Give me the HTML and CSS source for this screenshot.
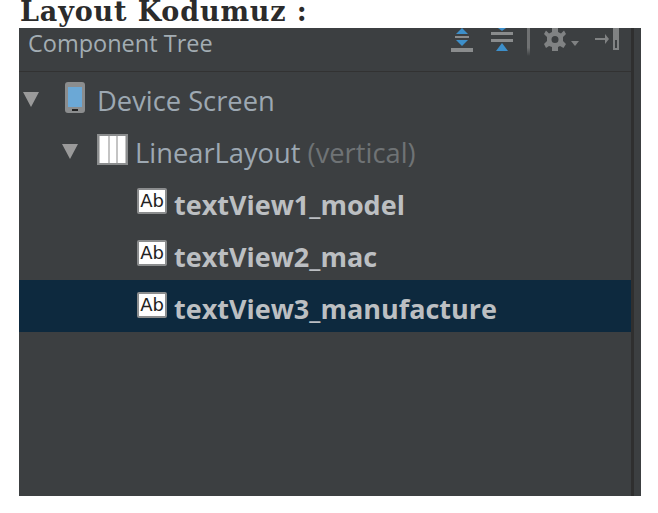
FILE: index.html
```html
<!DOCTYPE html>
<html lang="en">
<head>
  <meta charset="UTF-8">
  <meta name="viewport" content="width=device-width, initial-scale=1.0">
  <title>Layout Kodumuz</title>
  <link rel="stylesheet" href="styles.css">
</head>
<body>
  <h1 class="page-title">Layout Kodumuz :</h1>

  <div class="panel">
    <div class="panel-main">
      <!-- Header -->
      <div class="panel-header">
        <span class="panel-title">Component Tree</span>
        <div class="toolbar">
          <svg class="tool tool-expand" width="24" height="24" viewBox="0 0 24 24">
            <path d="M12 0L18 6H6z" fill="#3d8fca"/>
            <rect x="5" y="8" width="14" height="2" fill="#8a8c8d"/>
            <path d="M6 12H18L12 18z" fill="#3d8fca"/>
            <rect x="1" y="20" width="22" height="4" fill="#8a8c8d"/>
          </svg>
          <svg class="tool tool-collapse" width="24" height="24" viewBox="0 0 24 24">
            <path d="M8 0H16L12 3z" fill="#3d8fca"/>
            <rect x="1" y="4" width="22" height="3" fill="#8a8c8d"/>
            <rect x="1" y="11" width="22" height="3" fill="#8a8c8d"/>
            <path d="M12 15L18 23H6z" fill="#3d8fca"/>
          </svg>
          <span class="tool-sep"></span>
          <svg class="tool tool-gear" width="24" height="24" viewBox="0 0 24 24">
            <path d="M9 0H15V4L18 5.500L21 2.500L23 6L20 9V13L23 16L20.500 20L17 18L15 19V23H9V19L6 18L3 20L1 16L4 13V9L1 6L3 2.500L6 5.500L9 4zM12 8A3.500 3.500 0 1 0 12 15A3.500 3.500 0 1 0 12 8z" fill="#808283" fill-rule="evenodd"/>
          </svg>
          <svg class="tool-caret" width="8" height="5" viewBox="0 0 8 5">
            <path d="M0 0H8L4 5z" fill="#808283"/>
          </svg>
          <svg class="tool tool-pin" width="24" height="24" viewBox="0 0 24 24">
            <rect x="0" y="10" width="12" height="2" fill="#808283"/>
            <path d="M10 6L14 11L10 16z" fill="#808283"/>
            <path d="M18 0H24V22H18zM20 12V20H22V12z" fill="#808283" fill-rule="evenodd"/>
          </svg>
        </div>
      </div>

      <!-- Tree -->
      <div class="tree">
        <div class="row level-0">
          <span class="arrow"></span>
          <svg class="icon-phone" width="20" height="31" viewBox="0 0 20 31">
            <rect x="0" y="0" width="20" height="31" rx="3" fill="#8b8d8e"/>
            <rect x="3" y="5" width="14" height="20" fill="#6ba8d6"/>
            <rect x="7" y="27" width="6" height="2" fill="#222"/>
          </svg>
          <span class="label">Device Screen</span>
        </div>
        <div class="row level-1">
          <span class="arrow"></span>
          <svg class="icon-linear" width="31" height="31" viewBox="0 0 31 31">
            <rect x="0" y="0" width="31" height="31" fill="#8b8d8e"/>
            <rect x="2" y="2" width="27" height="27" fill="#c4c4c4"/>
            <rect x="3" y="2" width="8" height="27" fill="#fff"/>
            <rect x="13" y="2" width="6" height="27" fill="#fff"/>
            <rect x="21" y="2" width="7" height="27" fill="#fff"/>
          </svg>
          <span class="label">LinearLayout <span class="muted">(vertical)</span></span>
        </div>
        <div class="row level-2">
          <span class="ab-icon">Ab</span>
          <span class="label label-bold">textView1_model</span>
        </div>
        <div class="row level-2">
          <span class="ab-icon">Ab</span>
          <span class="label label-bold">textView2_mac</span>
        </div>
        <div class="row level-2 selected">
          <span class="ab-icon">Ab</span>
          <span class="label label-bold">textView3_manufacture</span>
        </div>
      </div>
    </div>
    <div class="panel-edge"></div>
  </div>
</body>
</html>
```

FILE: styles.css
```css
body {
  margin: 0;
  background: #fff;
  overflow: hidden;
}
.page-title {
  height: 28px;
  margin: 0;
  padding-left: 20px;
  font-family: "DejaVu Serif", serif;
  font-size: 27px;
  font-weight: bold;
  line-height: 24px;
  letter-spacing: 0.850px;
  color: #2b2b2b;
}
.panel {
  display: flex;
  width: 622px;
  height: 468px;
  margin-left: 19px;
  background: #3c3f41;
  font-family: "Open Sans", sans-serif;
}
.panel-main {
  flex: 1;
  min-width: 0;
}
.panel-edge {
  width: 7px;
  border-left: 3px solid #2f2f2f;
}
.panel-header {
  display: flex;
  justify-content: space-between;
  height: 43px;
  padding: 0 12px 0 9px;
  border-bottom: 1px solid #323232;
  overflow: hidden;
}
.panel-title {
  font-size: 23.500px;
  line-height: 30px;
  color: #a3adb3;
}
.toolbar {
  display: flex;
  align-items: flex-start;
}
.tool {
  flex: none;
}
.tool-collapse {
  margin-left: 16px;
}
.tool-sep {
  width: 3px;
  height: 28px;
  margin-left: 13px;
  background: linear-gradient(#707273 70%, #3c3f41);
}
.tool-gear {
  margin-left: 13px;
}
.tool-caret {
  margin: 13px 0 0 4px;
}
.tool-pin {
  margin-left: 16px;
}
.tree {
  height: 424px;
}
.row {
  display: flex;
  align-items: center;
  height: 52px;
  padding-top: 6px;
  box-sizing: border-box;
}
.row.selected {
  background: #0d293e;
}
.level-0 {
  padding-left: 4px;
}
.level-1 {
  padding-left: 43px;
}
.level-2 {
  padding-left: 118px;
}
.arrow {
  width: 0;
  height: 0;
  margin-bottom: 4px;
  border-left: 8.500px solid transparent;
  border-right: 8.500px solid transparent;
  border-top: 15px solid #9a9a9a;
}
.icon-phone {
  margin: 0 12px 7px 26px;
}
.icon-linear {
  margin: 0 7px 7px 19px;
}
.ab-icon {
  width: 30px;
  height: 26px;
  margin: 0 7px 8px 0;
  border: 2px solid #8b8d8e;
  border-radius: 2px;
  box-sizing: border-box;
  background: #fff;
  color: #222;
  font-family: "DejaVu Sans", sans-serif;
  font-size: 18px;
  line-height: 22px;
  text-align: center;
}
.label {
  font-size: 27.300px;
  line-height: 36px;
  color: #9da8b2;
  white-space: nowrap;
}
.label-bold {
  font-size: 27px;
  font-weight: bold;
  color: #bcbfc2;
}
.muted {
  color: #6f7375;
}
```
